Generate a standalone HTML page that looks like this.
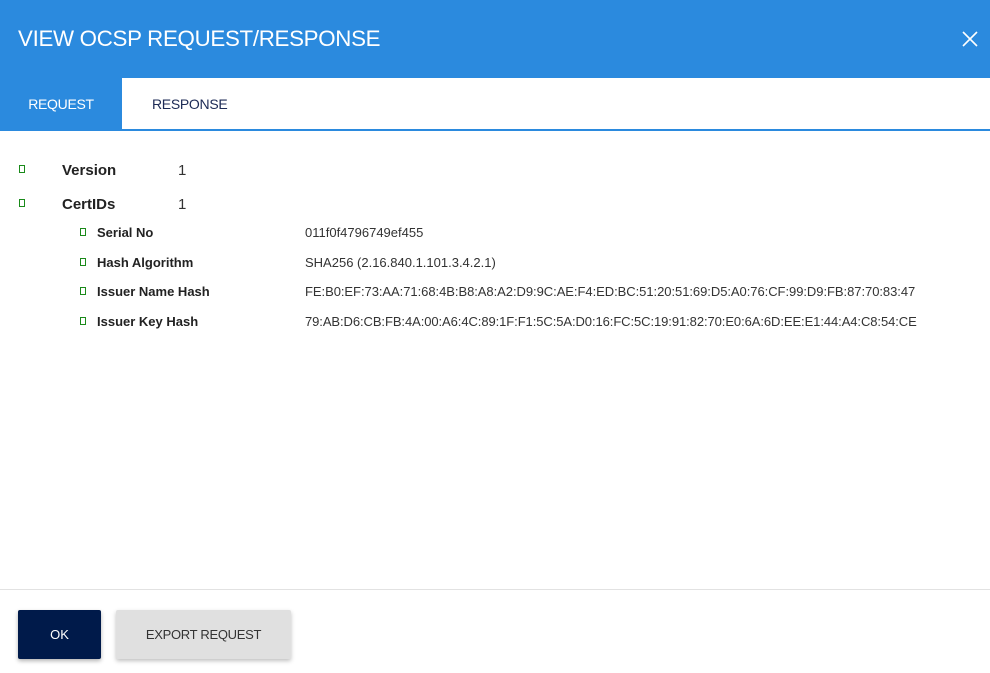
<!DOCTYPE html>
<html><head><meta charset="utf-8"><style>
*{margin:0;padding:0;box-sizing:border-box}
body{width:990px;height:673px;background:#fff;font-family:"Liberation Sans",sans-serif;position:relative;overflow:hidden;color:#333}
.hdr{position:absolute;left:0;top:0;width:990px;height:78px;background:#2b8ade}
.title{position:absolute;left:18px;top:26px;font-size:22.3px;color:#fff;letter-spacing:-0.3px}
.x{position:absolute;left:961px;top:30px}
.tabs{position:absolute;top:78px;left:0;width:990px;height:53px;border-bottom:2px solid #2b8ade}
.tab{position:absolute;top:0;height:51px;line-height:52px;font-size:14px;letter-spacing:-0.3px}
.t1{left:0;width:122px;background:#2b8ade;color:#fff;text-align:center}
.t2{left:152px;color:#1c2a55}
.row{position:absolute;font-size:14px}
.sq{position:absolute;width:6px;height:8px;border:1.3px solid #1a8a1a}
.lbl{position:absolute;font-weight:bold;color:#222}
.val{position:absolute;color:#333}
.sm{font-size:13px}
.foot{position:absolute;left:0;top:589px;width:990px;border-top:1px solid #e2e2e2}
.ok{position:absolute;left:18px;top:610px;width:83px;height:49px;background:#001a4a;color:#fff;font-size:13px;text-align:center;line-height:49px;border-radius:2px;box-shadow:0 2px 4px rgba(0,0,0,.3)}
.ex{position:absolute;left:116px;top:610px;width:175px;height:49px;background:#e0e0e0;color:#333;font-size:13px;text-align:center;line-height:49px;border-radius:2px;box-shadow:0 2px 4px rgba(0,0,0,.25);letter-spacing:-0.3px}
</style></head><body>
<div class="hdr"><div class="title">VIEW OCSP REQUEST/RESPONSE</div>
<svg class="x" width="18" height="18" viewBox="0 0 18 18"><path d="M2 2L16 16M16 2L2 16" stroke="#fff" stroke-width="1.6"/></svg></div>
<div class="tabs"><div class="tab t1">REQUEST</div><div class="tab t2">RESPONSE</div></div>

<div class="sq" style="left:19px;top:165px"></div>
<div class="row lbl" style="left:62px;top:162px;font-size:15px">Version</div>
<div class="row val" style="left:178px;top:162px;font-size:15px">1</div>
<div class="sq" style="left:19px;top:199px"></div>
<div class="row lbl" style="left:62px;top:196px;font-size:15px">CertIDs</div>
<div class="row val" style="left:178px;top:196px;font-size:15px">1</div>

<div class="sq" style="left:80px;top:228px"></div>
<div class="row lbl sm" style="left:97px;top:225px">Serial No</div>
<div class="row val sm" style="left:305px;top:225px">011f0f4796749ef455</div>
<div class="sq" style="left:80px;top:258px"></div>
<div class="row lbl sm" style="left:97px;top:255px">Hash Algorithm</div>
<div class="row val sm" style="left:305px;top:255px">SHA256 (2.16.840.1.101.3.4.2.1)</div>
<div class="sq" style="left:80px;top:287px"></div>
<div class="row lbl sm" style="left:97px;top:284px">Issuer Name Hash</div>
<div class="row val sm" style="left:305px;top:284px;letter-spacing:-0.05px">FE:B0:EF:73:AA:71:68:4B:B8:A8:A2:D9:9C:AE:F4:ED:BC:51:20:51:69:D5:A0:76:CF:99:D9:FB:87:70:83:47</div>
<div class="sq" style="left:80px;top:317px"></div>
<div class="row lbl sm" style="left:97px;top:314px">Issuer Key Hash</div>
<div class="row val sm" style="left:305px;top:314px;letter-spacing:-0.08px">79:AB:D6:CB:FB:4A:00:A6:4C:89:1F:F1:5C:5A:D0:16:FC:5C:19:91:82:70:E0:6A:6D:EE:E1:44:A4:C8:54:CE</div>

<div class="foot"></div>
<div class="ok">OK</div>
<div class="ex">EXPORT REQUEST</div>
</body></html>
